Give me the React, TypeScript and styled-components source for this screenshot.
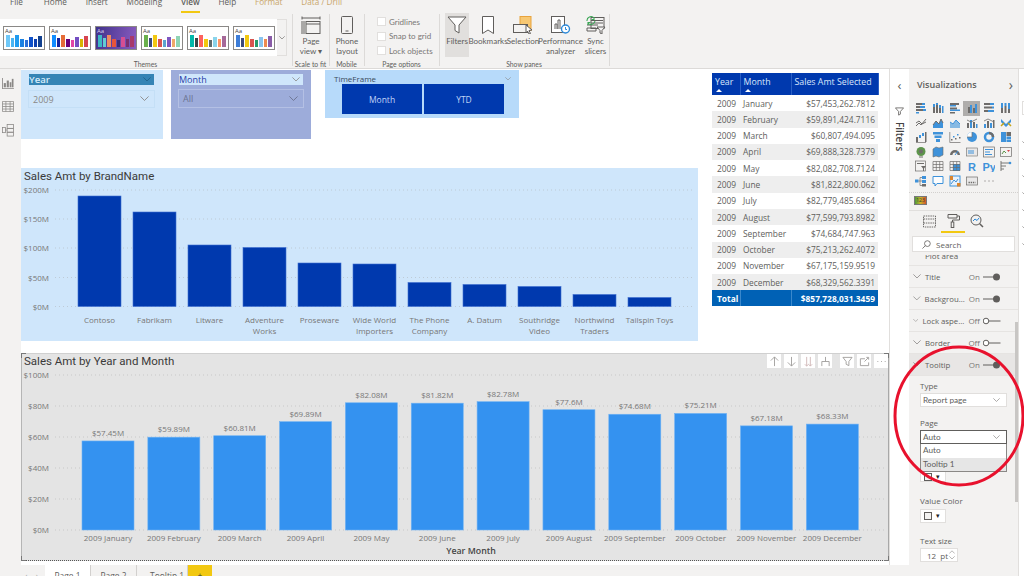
import * as React from "react";
import styled, { createGlobalStyle } from "styled-components";

const GRAY = "#605e5c";
const BLUE = "#2b88d8";
const UI_FONT = `"Open Sans", "Noto Sans", sans-serif`;
const LABEL_FONT = `Lato, "Open Sans", sans-serif`;

const GlobalStyle = createGlobalStyle`
  html, body { margin: 0; padding: 0; background: #fff; }
  * { box-sizing: border-box; }
  body { font-family: ${UI_FONT}; color: ${GRAY}; }
`;

const THEMES = [
  { bg: "#fff", ink: "#444", bars: ["#6fc8f8", "#4ab4f2", "#1f9bf0", "#1b80e2", "#2a6fd8", "#0f50c8", "#0d3fae", "#12408f"] },
  { bg: "#fff", ink: "#444", bars: ["#118dff", "#12239e", "#e66c37", "#6b007b", "#e044a7", "#744ec2", "#d9b300", "#d64550"] },
  { bg: "linear-gradient(100deg, #40328c, #8a5cc0)", ink: "#d8d0f0", bars: ["#3fb8c4", "#62ccd4", "#ef8a62", "#e8553a", "#3b2d7a", "#d64f93", "#7a2f70", "#a83a6a"] },
  { bg: "#fff", ink: "#444", bars: ["#6ab04c", "#3b4a7a", "#f2c811", "#d9534f", "#5ba4cf", "#7e57c2", "#f0a868", "#8fd4b4"] },
  { bg: "#fff", ink: "#444", bars: ["#01b8aa", "#374649", "#fd625e", "#f2c80f", "#5f6b6d", "#8ad4eb", "#fe9666", "#a66999"] },
  { bg: "#fff", ink: "#444", bars: ["#3d7dd8", "#3e4a7a", "#f2c811", "#d9534f", "#2a9a6a", "#8ac4ee", "#ee8a4f", "#8a5ca8"] },
];
const THEME_HEIGHTS = [12, 9, 12, 8, 7, 10, 8, 11];

const BRANDS = [
  { name: ["Contoso"], top: 197 },
  { name: ["Fabrikam"], top: 213 },
  { name: ["Litware"], top: 246 },
  { name: ["Adventure", "Works"], top: 248.5 },
  { name: ["Proseware"], top: 264 },
  { name: ["Wide World", "Importers"], top: 265 },
  { name: ["The Phone", "Company"], top: 283.5 },
  { name: ["A. Datum"], top: 285.5 },
  { name: ["Southridge", "Video"], top: 287.5 },
  { name: ["Northwind", "Traders"], top: 295.5 },
  { name: ["Tailspin Toys"], top: 298.5 },
];

const MONTHS = [
  { m: "January", v: 57.45, l: "$57.45M", s: "$57,453,262.7812" },
  { m: "February", v: 59.89, l: "$59.89M", s: "$59,891,424.7116" },
  { m: "March", v: 60.81, l: "$60.81M", s: "$60,807,494.095" },
  { m: "April", v: 69.89, l: "$69.89M", s: "$69,888,328.7379" },
  { m: "May", v: 82.08, l: "$82.08M", s: "$82,082,708.7124" },
  { m: "June", v: 81.82, l: "$81.82M", s: "$81,822,800.062" },
  { m: "July", v: 82.78, l: "$82.78M", s: "$82,779,485.6864" },
  { m: "August", v: 77.6, l: "$77.6M", s: "$77,599,793.8982" },
  { m: "September", v: 74.68, l: "$74.68M", s: "$74,684,747.963" },
  { m: "October", v: 75.21, l: "$75.21M", s: "$75,213,262.4072" },
  { m: "November", v: 67.18, l: "$67.18M", s: "$67,175,159.9519" },
  { m: "December", v: 68.33, l: "$68.33M", s: "$68,329,562.3391" },
];

const rects = (list: number[][]) =>
  list.map((r, i) => <rect key={i} x={r[0]} y={r[1]} width={r[2]} height={r[3]} fill={r[4] ? BLUE : GRAY} />);

const VIZ_ICONS: React.ReactNode[] = [
  rects([[1, 1, 6, 2, 0], [7, 1, 3, 2, 1], [1, 4, 4, 2, 0], [5, 4, 5, 2, 1], [1, 7, 7, 2, 0], [8, 7, 3, 2, 1], [1, 10, 3, 1.5, 1]]),
  rects([[1, 5, 2, 6, 0], [1, 2, 2, 3, 1], [4, 3, 2, 8, 0], [4, 1, 2, 2, 1], [7, 6, 2, 5, 0], [7, 3, 2, 3, 1], [10, 4, 1.5, 7, 1]]),
  rects([[1, 1, 9, 2, 0], [1, 3, 6, 1.5, 1], [1, 5.5, 7, 2, 0], [1, 7.5, 10, 1.5, 1], [1, 10, 5, 1.5, 0]]),
  rects([[2, 5, 2, 6, 0], [4, 3, 2, 8, 1], [7, 6, 2, 5, 0], [9, 2, 2, 9, 1]]),
  rects([[1, 1, 6, 2, 0], [7, 1, 4, 2, 1], [1, 4.5, 8, 2, 0], [9, 4.5, 2, 2, 1], [1, 8, 4, 2, 0], [5, 8, 6, 2, 1]]),
  rects([[1, 1, 2, 5, 1], [1, 6, 2, 5, 0], [4.5, 1, 2, 3, 1], [4.5, 4, 2, 7, 0], [8, 1, 2, 6, 1], [8, 7, 2, 4, 0]]),
  <path d="M1 9l3-3 2 2 5-6M1 6l3-2 3 3 4-2" fill="none" stroke={GRAY} strokeWidth="1" />,
  <><path d="M1 11V8l3-4 3 3 2-5 2 4v5z" fill={BLUE} /><path d="M1 8l3-4 3 3 2-5 2 4" fill="none" stroke={GRAY} /></>,
  <><path d="M1 11V5l3 2 3-4 4 4v4z" fill={BLUE} opacity=".6" /><path d="M1 5l3 2 3-4 4 4" fill="none" stroke={BLUE} /></>,
  <>{rects([[1, 6, 2, 5, 0], [4, 3, 2, 8, 1], [7, 5, 2, 6, 0], [10, 7, 1.5, 4, 1]])}<path d="M1 3l4 2 6-3" fill="none" stroke={GRAY} strokeWidth=".8" /></>,
  <>{rects([[1, 7, 2, 4, 1], [4, 4, 2, 7, 0], [7, 6, 2, 5, 1], [10, 3, 1.5, 8, 0]])}<path d="M1 4l4-2 6 3" fill="none" stroke={GRAY} strokeWidth=".8" /></>,
  <><path d="M1 2l5 5 5-5v3L6 10 1 5z" fill={BLUE} /><path d="M1 9l3-3M8 6l3 3" stroke="#c19c00" strokeWidth="1.5" /></>,
  rects([[1, 6, 2, 5, 0], [4, 4, 2, 3, 1], [7, 2, 2, 3, 1], [10, 1, 1.5, 10, 0], [1, 11, 10, .7, 0]]),
  rects([[1, 1, 10, 2.5, 1], [2.5, 4.5, 7, 2.5, 1], [4, 8, 4, 3, 1]]),
  rects([[2, 8, 1.5, 1.5, 0], [4, 5, 1.5, 1.5, 1], [6, 7, 1.5, 1.5, 0], [8, 3, 1.5, 1.5, 1], [10, 6, 1.5, 1.5, 0], [0.5, 1, .7, 10, 0], [0.5, 11, 11, .7, 0]]),
  <><circle cx="6" cy="6" r="5" fill={BLUE} /><path d="M6 6V1a5 5 0 0 0-5 5z" fill="#fff" /><path d="M6 1v5H1" stroke={GRAY} fill="none" strokeWidth=".7" /></>,
  <><circle cx="6" cy="6" r="4" fill="none" stroke={BLUE} strokeWidth="2.5" /><path d="M6 2a4 4 0 0 1 4 4" fill="none" stroke={GRAY} strokeWidth="2.5" /></>,
  rects([[1, 1, 5, 10, 1], [6.5, 1, 4.5, 4, 0], [6.5, 5.5, 4.5, 2.5, 1], [6.5, 8.5, 4.5, 2.5, 1]]),
  <><circle cx="6" cy="5.5" r="4.5" fill="#4d8a3a" /><circle cx="6" cy="5.5" r="2" fill={GRAY} /><path d="M4 11h4" stroke={GRAY} /></>,
  <path d="M1 3l3-2 3 1 4-1v8l-4 2-3-1-3 1z" fill={BLUE} stroke={GRAY} strokeWidth=".6" />,
  <><path d="M1 9a5 5 0 0 1 10 0H8.5a2.5 2.5 0 0 0-5 0z" fill={GRAY} /><path d="M6 9l3-4" stroke={BLUE} strokeWidth="1" /></>,
  <><rect x=".5" y="2" width="11" height="8" fill="#e8e8e8" stroke={GRAY} strokeWidth=".6" /><path d="M3 4v4M5 4v4M7 4v4" stroke={BLUE} strokeWidth="1" /></>,
  <><rect x=".5" y="1" width="11" height="10" fill="#f3f2f1" stroke={GRAY} strokeWidth=".7" /><path d="M2 3.5h8M2 6h5M2 8.5h7" stroke={BLUE} strokeWidth="1" /></>,
  <><rect x=".5" y="1.5" width="11" height="9" fill="#f3f2f1" stroke={GRAY} strokeWidth=".7" /><path d="M2 8l2-3 2 2" stroke="#4d8a3a" fill="none" /><path d="M7 4h3l-1.5 2z" fill="#d13438" /></>,
  <><rect x=".5" y="1" width="10" height="10" fill="none" stroke={GRAY} strokeWidth=".7" /><path d="M2 3.5h7" stroke={GRAY} /><path d="M6 6h5l-2 2.5V11H8V8.5z" fill={GRAY} /></>,
  <path d="M1 1.5h10v9H1zM1 4.5h10M1 7.5h10M4.3 1.5v9M7.7 1.5v9" fill="none" stroke={GRAY} strokeWidth=".7" />,
  <><rect x="4" y="4" width="7" height="7" fill={BLUE} /><path d="M1 1.5h10v9H1zM1 4.5h10M1 7.5h10M4.3 1.5v9M7.7 1.5v9" fill="none" stroke={GRAY} strokeWidth=".7" /></>,
  <text x="2" y="10.5" fontSize="11" fontWeight="700" fontFamily="Liberation Sans, sans-serif" fill={BLUE}>R</text>,
  <text x="-.5" y="10.5" fontSize="11" fontWeight="700" fontFamily="Liberation Sans, sans-serif" fill={BLUE}>Py</text>,
  <><path d="M1 1v10M1 3h8M1 6h5M1 9h3" fill="none" stroke={GRAY} strokeWidth=".9" /><circle cx="10" cy="3" r="1.3" fill={BLUE} /></>,
  <><rect x="0" y="4.5" width="3.5" height="3" fill={BLUE} /><rect x="7" y="1" width="4" height="3" fill={BLUE} /><rect x="7" y="5" width="4" height="3" fill={BLUE} /><rect x="7" y="9" width="4" height="2.5" fill={GRAY} /><path d="M3.5 6H7M5 2.5V10.5h2M5 2.5h2" stroke={GRAY} strokeWidth=".7" fill="none" /></>,
  <path d="M1 1.5h10v7H5l-2 2.5V8.5H1z" fill="#fff" stroke={BLUE} strokeWidth="1" />,
  <><rect x="1" y="1" width="10" height="10" fill="#e8f1fa" stroke={BLUE} /><path d="M2 9l3-4 2 2 2-3" stroke={BLUE} fill="none" /><rect x="1" y="1" width="3" height="4" fill="#d87a1a" /><rect x="8" y="8" width="3.5" height="3.5" fill="#d87a1a" /></>,
  <><rect x=".5" y="2" width="11" height="8" fill="#e8e8e8" stroke={GRAY} strokeWidth=".7" /><path d="M2.5 7.5h7" stroke={GRAY} strokeWidth="1.6" strokeDasharray="1.4 .8" /></>,
  <path d="M1.5 6h1M5.5 6h1M9.5 6h1" stroke={GRAY} strokeWidth="1" />,
];

const Chevron: React.FC<{ size?: number; color?: string }> = ({ size = 8, color = "#8a8886" }) => (
  <svg width={size} height={size * 0.6} viewBox="0 0 10 6"><path d="M.5.5L5 5 9.5.5" fill="none" stroke={color} strokeWidth="1" /></svg>
);

const ThemeThumb: React.FC<{ theme: typeof THEMES[number] }> = ({ theme }) => (
  <Thumb $bg={theme.bg}>
    <ThumbAa $ink={theme.ink}>Aa</ThumbAa>
    <ThumbBars>
      {theme.bars.map((c, i) => <ThumbBar key={i} $c={c} style={{ height: THEME_HEIGHTS[i] }} />)}
    </ThumbBars>
  </Thumb>
);

const Toggle: React.FC<{ on?: boolean }> = ({ on }) => (
  <ToggleWrap>
    <ToggleText>{on ? "On" : "Off"}</ToggleText>
    <svg width="18" height="8" viewBox="0 0 18 8">
      {on ? (
        <><path d="M0 4h11" stroke={GRAY} /><circle cx="13.5" cy="4" r="3.5" fill={GRAY} /></>
      ) : (
        <><path d="M6 4h11.500" stroke={GRAY} /><circle cx="3" cy="4" r="2.800" fill="#fff" stroke={GRAY} /></>
      )}
    </svg>
  </ToggleWrap>
);

const PropRow: React.FC<{ label: string; on?: boolean; active?: boolean }> = ({ label, on, active }) => (
  <Row $active={active}>
    <Chevron size={8} />
    <RowLabel>{label}</RowLabel>
    <Toggle on={on} />
  </Row>
);

const GRID_1 = [{ y: 191, t: "$200M" }, { y: 220, t: "$150M" }, { y: 249, t: "$100M" }, { y: 278.5, t: "$50M" }, { y: 307.5, t: "$0M" }];
const GRID_2 = [{ y: 375, t: "$100M" }, { y: 406, t: "$80M" }, { y: 437, t: "$60M" }, { y: 468, t: "$40M" }, { y: 499, t: "$20M" }, { y: 530, t: "$0M" }];

const BrandChart: React.FC = () => (
  <svg width="677" height="155" viewBox="21 187 677 155">
    {GRID_1.map(g => (
      <g key={g.t}>
        <GridLine x1="55" x2="694" y1={g.y} y2={g.y} />
        <AxisText x="49" y={g.y + 3} textAnchor="end">{g.t}</AxisText>
      </g>
    ))}
    {BRANDS.map((b, i) => {
      const x = 78 + i * 55;
      return (
        <g key={b.name[0]}>
          <rect x={x} y={b.top} width="43" height={307.5 - b.top} fill="#0039ae" stroke="#3f6fd0" strokeWidth=".6" />
          {b.name.map((line, j) => (
            <AxisText key={line} x={x + 21.5} y={324 + j * 11} textAnchor="middle">{line}</AxisText>
          ))}
        </g>
      );
    })}
  </svg>
);

const MonthChart: React.FC = () => (
  <svg width="866" height="190" viewBox="22 370 866 190">
    {GRID_2.map(g => (
      <g key={g.t}>
        <GridLine x1="55" x2="885" y1={g.y} y2={g.y} />
        <AxisText x="49" y={g.y + 3} textAnchor="end">{g.t}</AxisText>
      </g>
    ))}
    {MONTHS.map((d, i) => {
      const x = 82 + i * 65.85;
      const top = 530 - d.v * 1.55;
      return (
        <g key={d.m}>
          <rect x={x} y={top} width="52" height={530 - top} fill="#3492f0" stroke="#6fb2f4" strokeWidth=".6" />
          <AxisText x={x + 26} y={top - 5} textAnchor="middle">{d.l}</AxisText>
          <AxisText x={x + 26} y="541" textAnchor="middle">{`2009 ${d.m}`}</AxisText>
        </g>
      );
    })}
    <AxisTitle x="471" y="554" textAnchor="middle">Year Month</AxisTitle>
  </svg>
);

const ToolIcon: React.FC<{ children: React.ReactNode }> = ({ children }) => (
  <ToolBtn>
    <svg width="11" height="11" viewBox="0 0 12 12" fill="none" stroke="#a19f9d" strokeWidth="1">{children}</svg>
  </ToolBtn>
);

export default function App() {
  return (
    <Page>
      <GlobalStyle />
      <TabRow>
        {["File", "Home", "Insert", "Modeling", "View", "Help"].map(t => (
          <Tab key={t} $active={t === "View"}>{t}</Tab>
        ))}
        <Tab $gold>Format</Tab>
        <Tab $gold>Data / Drill</Tab>
      </TabRow>

      <Ribbon>
        <Group $w={293}>
          <GroupBody>
            <ThemesPanel>
              {THEMES.map((t, i) => <ThemeThumb key={i} theme={t} />)}
            </ThemesPanel>
            <ThemesMore><Chevron size={6} color={GRAY} /></ThemesMore>
          </GroupBody>
          <GroupLabel>Themes</GroupLabel>
        </Group>

        <Group $w={37}>
          <GroupBody>
            <RibbonBtn $w={36}>
              <svg width="20" height="18" viewBox="0 0 20 18" fill="none" stroke={GRAY} strokeWidth="1">
                <path d="M1 2h18M1 .5v3M19 .5v3M1 5v13M3 5v13" />
                <rect x="5" y="5.5" width="14" height="12" />
                <path d="M5 8h14" />
              </svg>
              <BtnText>Page<br />view ▾</BtnText>
            </RibbonBtn>
          </GroupBody>
          <GroupLabel>Scale to fit</GroupLabel>
        </Group>

        <Group $w={35}>
          <GroupBody>
            <RibbonBtn $w={34}>
              <svg width="12" height="18" viewBox="0 0 12 18" fill="none" stroke={GRAY} strokeWidth="1">
                <rect x=".5" y=".5" width="11" height="17" rx="1" />
                <path d="M4.5 15h3" />
              </svg>
              <BtnText>Phone<br />layout</BtnText>
            </RibbonBtn>
          </GroupBody>
          <GroupLabel>Mobile</GroupLabel>
        </Group>

        <Group $w={75}>
          <GroupBody>
            <CheckList>
              {["Gridlines", "Snap to grid", "Lock objects"].map(c => (
                <CheckRow key={c}><CheckBox />{c}</CheckRow>
              ))}
            </CheckList>
          </GroupBody>
          <GroupLabel>Page options</GroupLabel>
        </Group>

        <Group $w={170}>
          <GroupBody $pad={5}>
            <RibbonBtn $w={24} $selected>
              <svg width="20" height="18" viewBox="0 0 20 18" fill="#fff" stroke={GRAY} strokeWidth="1">
                <path d="M1 1h18l-7 8v8l-4-2.5V9z" />
              </svg>
              <BtnText>Filters</BtnText>
            </RibbonBtn>
            <RibbonBtn $w={38}>
              <svg width="14" height="18" viewBox="0 0 14 18" fill="#fff" stroke={GRAY} strokeWidth="1">
                <path d="M1.5 .5h11v17L7 14l-5.500 3.500z" />
              </svg>
              <BtnText>Bookmarks</BtnText>
            </RibbonBtn>
            <RibbonBtn $w={32}>
              <svg width="20" height="18" viewBox="0 0 20 18" stroke={GRAY} strokeWidth="1">
                <rect x="7" y=".5" width="11" height="14" fill="#f7c873" stroke="#e8a33d" />
                <rect x=".5" y="8.500" width="14" height="8" fill="#f3f2f1" />
                <path d="M13 9l6 5-3 .5 1.500 3-1.500.5-1.500-3-1.500 2z" fill="#fff" />
              </svg>
              <BtnText>Selection</BtnText>
            </RibbonBtn>
            <RibbonBtn $w={43}>
              <svg width="20" height="18" viewBox="0 0 20 18" fill="none" stroke={GRAY} strokeWidth="1">
                <rect x=".5" y=".5" width="13" height="16" fill="#fff" />
                <path d="M4 13V8h2v5M7 13V4h2v9" />
                <circle cx="14.500" cy="13" r="4" fill="#fff" stroke="#2b88d8" strokeWidth="1.400" />
                <path d="M14.500 11v2.500h1.500" stroke="#2b88d8" />
              </svg>
              <BtnText>Performance<br />analyzer</BtnText>
            </RibbonBtn>
            <RibbonBtn $w={27}>
              <svg width="20" height="18" viewBox="0 0 20 18" fill="none" stroke={GRAY} strokeWidth="1">
                <rect x="5" y="1.500" width="13" height="11" />
                <path d="M1 9h11M1 12h9v3H1zM5 4.500h12M5 7h12" />
                <path d="M11 11h8l-3 3.500V18l-2-1v-2.500z" fill="#f3f2f1" />
                <path d="M1 5a4 4 0 0 1 7-3M8 1v2.500H5.500M9 5a4 4 0 0 1-7 2M2 9V6.500h2.500" stroke="#3aa655" strokeWidth="1.100" />
              </svg>
              <BtnText>Sync<br />slicers</BtnText>
            </RibbonBtn>
          </GroupBody>
          <GroupLabel>Show panes</GroupLabel>
        </Group>
      </Ribbon>

      <Body>
        <Rail>
          <svg width="12" height="11" viewBox="0 0 14 13" fill="#8a8886">
            <path d="M1 0v12h13v1H0V0z" /><rect x="2" y="6" width="2.500" height="5" /><rect x="5.500" y="3" width="2.500" height="8" /><rect x="9" y="5" width="2" height="6" /><rect x="11.500" y="1" width="2" height="10" />
          </svg>
          <svg width="12" height="11" viewBox="0 0 14 13" fill="none" stroke="#8a8886" strokeWidth=".9">
            <path d="M.5.500h13v12H.5zM.5 3.500h13M.5 6.500h13M.5 9.500h13M4.500.500v12M9.500.500v12" />
          </svg>
          <svg width="12" height="13" viewBox="0 0 14 15" fill="none" stroke="#8a8886" strokeWidth=".9">
            <rect x="6" y=".5" width="7.500" height="4.500" /><rect x="6" y="5" width="7.500" height="4.500" /><rect x="6" y="9.500" width="7.500" height="4.500" /><rect x=".5" y="4" width="3.500" height="6" /><path d="M4 7h2" />
          </svg>
        </Rail>

        <Center>
          <CenterTop>
            <Canvas>
              <TopArea>
                <LeftCol>
                  <Slicers>
                    <YearSlicer>
                      <YearHeader>Year<Chevron size={8} color="#1f5f88" /></YearHeader>
                      <SlicerSelect>2009<Chevron size={9} /></SlicerSelect>
                    </YearSlicer>
                    <MonthSlicer>
                      <MonthHeader>Month<Chevron size={8} /></MonthHeader>
                      <MonthSelect>All<Chevron size={9} color="#6b7390" /></MonthSelect>
                    </MonthSlicer>
                    <TimeSlicer>
                      <TimeHeader>TimeFrame<Chevron size={6} /></TimeHeader>
                      <TimeButtons>
                        <TimeBtn>Month</TimeBtn>
                        <TimeBtn>YTD</TimeBtn>
                      </TimeButtons>
                    </TimeSlicer>
                  </Slicers>
                  <BrandCard>
                    <ChartTitle>Sales Amt by BrandName</ChartTitle>
                    <BrandChart />
                  </BrandCard>
                </LeftCol>

                <SalesTable>
                  <thead>
                    <tr>
                      <HeadCell $w={28}>Year<SortUp /></HeadCell>
                      <HeadCell $w={51}>Month<SortUp /></HeadCell>
                      <HeadCell $w={87}>Sales Amt Selected</HeadCell>
                    </tr>
                  </thead>
                  <tbody>
                    {MONTHS.map((d, i) => (
                      <BodyRow key={d.m} $alt={i % 2 === 1}>
                        <YearCell>2009</YearCell>
                        <MonthCell>{d.m}</MonthCell>
                        <AmtCell>{d.s}</AmtCell>
                      </BodyRow>
                    ))}
                    <TotalRow>
                      <TotalCell>Total</TotalCell>
                      <TotalCell />
                      <TotalAmt>$857,728,031.3459</TotalAmt>
                    </TotalRow>
                  </tbody>
                </SalesTable>
              </TopArea>

              <MonthCard>
                <MonthTitle>Sales Amt by Year and Month</MonthTitle>
                <MonthChart />
                <VisualToolbar>
                  <ToolGroup>
                    <ToolIcon><path d="M6 11V1M2 5l4-4 4 4" /></ToolIcon>
                    <ToolIcon><path d="M6 1v10M2 7l4 4 4-4" /></ToolIcon>
                    <ToolIcon><path d="M4 1v10M8 1v10M2 9l2 2 2-2M6 9l2 2 2-2" stroke="#d0b8b8" /></ToolIcon>
                    <ToolIcon><path d="M6 1v5M2 11V6h8v5" /></ToolIcon>
                  </ToolGroup>
                  <ToolGroup>
                    <ToolIcon><path d="M1 1.500h10L7.500 6v4.500l-3-1.500V6z" /></ToolIcon>
                    <ToolIcon><path d="M8 1.500h2.500V4M1.500 3h5M1.500 3v7.500h9V7M6 6l4-4" /></ToolIcon>
                    <ToolIcon><path d="M1.500 6h1M5.500 6h1M9.500 6h1" /></ToolIcon>
                  </ToolGroup>
                </VisualToolbar>
                <Corner $side="tl" />
                <Corner $side="tr" />
                <Corner $side="bl" />
                <Corner $side="br" />
              </MonthCard>
            </Canvas>

            <FiltersStrip>
              <StripChevron>‹</StripChevron>
              <svg width="9" height="9" viewBox="0 0 10 10" fill="none" stroke={GRAY} strokeWidth=".9"><path d="M9.500 1H.5l3.500 4v4l2-1V5z" /></svg>
              <FiltersLabel>Filters</FiltersLabel>
            </FiltersStrip>
          </CenterTop>

          <PageTabs>
            <TabArrows>‹ ›</TabArrows>
            <PageTab $active>Page 1</PageTab>
            <PageTab>Page 2</PageTab>
            <PageTab $w={51}>⋯ Tooltip 1</PageTab>
            <AddTab>+</AddTab>
          </PageTabs>
        </Center>

        <VizPane>
          <VizHead>Visualizations<PaneChevron>›</PaneChevron></VizHead>
          <VizGrid>
            {VIZ_ICONS.map((icon, i) => (
              <VizCell key={i} $selected={i === 3}>
                <svg width="12" height="12" viewBox="0 0 12 12">{icon}</svg>
              </VizCell>
            ))}
          </VizGrid>
          <HeatRow>
            <HeatIcon>123</HeatIcon>
          </HeatRow>
          <PaneTabs>
            <PaneTab>
              <svg width="13" height="13" viewBox="0 0 13 13" fill="none" stroke={GRAY} strokeWidth=".9" strokeDasharray="1.500 .8">
                <path d="M.5 1h12v11H.5zM.5 4h12M.5 8h12" />
              </svg>
            </PaneTab>
            <PaneTab $active>
              <svg width="13" height="14" viewBox="0 0 13 14" fill="none" stroke={GRAY} strokeWidth="1">
                <path d="M1 .5h9v3.500H1zM10 2h2.500v4H5.500v2" /><rect x="4.200" y="8" width="2.600" height="5.500" />
              </svg>
            </PaneTab>
            <PaneTab>
              <svg width="14" height="14" viewBox="0 0 14 14" fill="none" stroke={GRAY} strokeWidth="1">
                <circle cx="6" cy="6" r="5" /><path d="M9.500 9.500L13 13" strokeWidth="1.500" /><path d="M3 7l2-2 2 1.500 2-2.500" stroke="#2b88d8" />
              </svg>
            </PaneTab>
          </PaneTabs>
          <SearchBox>
            <svg width="9" height="9" viewBox="0 0 10 10" fill="none" stroke={GRAY} strokeWidth=".9"><circle cx="6" cy="4" r="3.200" /><path d="M3.700 6.300L.5 9.500" /></svg>
            Search
          </SearchBox>
          <ClippedRow><ClippedText>Plot area</ClippedText></ClippedRow>
          <PropRow label="Title" on />
          <PropRow label="Backgrou..." on />
          <PropRow label="Lock aspe..." />
          <PropRow label="Border" />
          <PropRow label="Tooltip" on active />
          <PaneForm>
            <TypeLabel>Type</TypeLabel>
            <Dropdown>Report page<Chevron size={7} /></Dropdown>
            <PageLabel>Page</PageLabel>
            <Dropdown $open>Auto<Chevron size={7} /></Dropdown>
            <Menu>
              <MenuItem>Auto</MenuItem>
              <MenuItem $hover>Tooltip 1</MenuItem>
            </Menu>
            <ColorBtnShort><SwatchBox /><Caret>▾</Caret></ColorBtnShort>
            <ValueLabel>Value Color</ValueLabel>
            <ColorBtn><SwatchBox /><Caret>▾</Caret></ColorBtn>
            <SizeLabel>Text size</SizeLabel>
            <Spinner>
              12&nbsp;&nbsp;pt
              <SpinArrows>
                <svg width="6" height="4" viewBox="0 0 10 6"><path d="M.5 5.500L5 1l4.500 4.500" fill="none" stroke="#8a8886" /></svg>
                <Chevron size={6} />
              </SpinArrows>
            </Spinner>
          </PaneForm>
          <PaneScroll />
        </VizPane>

        <FieldsStrip>
          <FieldsBox />
          {[137, 155, 172, 189, 206, 223, 240].map(y => (
            <FieldsChevron key={y}><Chevron size={7} /></FieldsChevron>
          ))}
        </FieldsStrip>
      </Body>

      <RedCircle width="134" height="144" viewBox="0 0 134 144">
        <ellipse cx="67" cy="72" rx="64" ry="69" fill="none" stroke="#e8112d" strokeWidth="3" />
      </RedCircle>
    </Page>
  );
}

const Page = styled.div`
  position: relative;
  width: 1024px;
  height: 576px;
  overflow: hidden;
  display: flex;
  flex-direction: column;
  background: #fff;
  font-family: ${UI_FONT};
`;

const TabRow = styled.div`
  display: flex;
  gap: 18.8px;
  height: 13px;
  padding-left: 10px;
  background: #f3f2f1;
  overflow: hidden;
`;

const Tab = styled.div<{ $active?: boolean; $gold?: boolean }>`
  height: 16px;
  margin-top: -3px;
  font-size: 8.2px;
  line-height: 10px;
  color: ${p => (p.$gold ? "#c9a66b" : "#605e5c")};
  font-weight: ${p => (p.$active ? 600 : 400)};
  border-bottom: ${p => (p.$active ? "2px solid #f2c811" : "none")};
  &:first-child { margin-right: 2px; }
`;

const Ribbon = styled.div`
  display: flex;
  height: 56px;
  background: #f3f2f1;
  border-bottom: 1px solid #dcdad8;
  box-shadow: 0 1px 1px rgba(0, 0, 0, 0.06);
`;

const Group = styled.div<{ $w: number }>`
  width: ${p => p.$w}px;
  display: flex;
  flex-direction: column;
  position: relative;
  &::after {
    content: "";
    position: absolute;
    right: 0;
    top: 1px;
    height: 52px;
    width: 1px;
    background: #dcdad8;
  }
`;

const GroupBody = styled.div<{ $pad?: number }>`
  height: 47px;
  display: flex;
  padding-left: ${p => p.$pad || 0}px;
`;

const GroupLabel = styled.div`
  height: 8px;
  line-height: 8px;
  text-align: center;
  font-family: ${LABEL_FONT};
  font-size: 6.8px;
  color: #605e5c;
  padding-right: 2px;
`;

const ThemesPanel = styled.div`
  width: 277px;
  height: 37px;
  margin-top: 6px;
  background: #fff;
  display: flex;
  gap: 4px;
  padding: 7px 0 0 3px;
`;

const ThemesMore = styled.div`
  width: 10px;
  height: 37px;
  margin-top: 6px;
  display: flex;
  align-items: center;
  justify-content: center;
  border: 1px solid #e1dfdd;
  border-left: none;
`;

const Thumb = styled.div<{ $bg: string }>`
  position: relative;
  width: 42px;
  height: 24px;
  background: ${p => p.$bg};
  border: 1px solid #8a8886;
`;

const ThumbAa = styled.div<{ $ink: string }>`
  position: absolute;
  left: 1px;
  top: 0;
  font-size: 6px;
  line-height: 9px;
  color: ${p => p.$ink};
`;

const ThumbBars = styled.div`
  position: absolute;
  left: 2px;
  right: 2px;
  bottom: 2px;
  display: flex;
  align-items: flex-end;
  gap: 1px;
`;

const ThumbBar = styled.div<{ $c: string }>`
  flex: 1;
  background: ${p => p.$c};
`;

const RibbonBtn = styled.div<{ $w: number; $selected?: boolean }>`
  width: ${p => p.$w}px;
  height: 44px;
  padding-top: 3px;
  display: flex;
  flex-direction: column;
  align-items: center;
  flex: none;
  background: ${p => (p.$selected ? "#e1dfdd" : "transparent")};
  & > svg { flex: none; }
`;

const BtnText = styled.div`
  margin-top: 2px;
  font-family: ${LABEL_FONT};
  font-size: 8px;
  line-height: 10px;
  text-align: center;
  white-space: nowrap;
  color: #605e5c;
`;

const CheckList = styled.div`
  display: flex;
  flex-direction: column;
  gap: 5.5px;
  padding: 4px 0 0 12px;
`;

const CheckRow = styled.div`
  display: flex;
  align-items: center;
  gap: 3px;
  height: 9px;
  font-family: ${LABEL_FONT};
  font-size: 8px;
  color: #797775;
  white-space: nowrap;
`;

const CheckBox = styled.span`
  width: 9px;
  height: 9px;
  background: #fff;
  border: 1px solid #e1dfdd;
`;

const Body = styled.div`
  flex: 1;
  display: flex;
  min-height: 0;
`;

const Rail = styled.div`
  width: 21px;
  flex: none;
  background: #f3f2f1;
  display: flex;
  flex-direction: column;
  align-items: center;
  gap: 12px;
  padding: 9px 5px 0 0;
`;

const Center = styled.div`
  width: 888px;
  flex: none;
  display: flex;
  flex-direction: column;
`;

const CenterTop = styled.div`
  height: 496px;
  display: flex;
`;

const Canvas = styled.div`
  width: 868px;
  flex: none;
  background: #fff;
`;

const TopArea = styled.div`
  display: flex;
  height: 273px;
`;

const LeftCol = styled.div`
  width: 677px;
  flex: none;
`;

const Slicers = styled.div`
  height: 99px;
  padding-top: 1px;
  display: flex;
  align-items: flex-start;
`;

const YearSlicer = styled.div`
  width: 142px;
  height: 69px;
  margin-right: 8px;
  padding: 4px 8px 0 7px;
  background: #cfe6fb;
`;

const YearHeader = styled.div`
  height: 11px;
  margin: 0 1px;
  padding: 0 3px 0 0;
  display: flex;
  align-items: center;
  justify-content: space-between;
  background: #3584b5;
  color: #d8ecfb;
  font-size: 9.6px;
  font-weight: 600;
`;

const SlicerSelect = styled.div`
  height: 18px;
  margin-top: 5px;
  padding: 0 5px 0 4px;
  display: flex;
  align-items: center;
  justify-content: space-between;
  border: 1px solid #c4dff6;
  color: #8a8886;
  font-size: 9px;
`;

const MonthSlicer = styled.div`
  width: 140px;
  height: 69px;
  margin-right: 14px;
  padding: 4px 7px 0 7px;
  background: #9dacda;
`;

const MonthHeader = styled(YearHeader)`
  margin: 0 1px;
  background: #cfe6fb;
  color: #2a3ea8;
  font-size: 9px;
  font-weight: 500;
`;

const MonthSelect = styled(SlicerSelect)`
  height: 19px;
  margin-top: 4px;
  border: 1px solid #b4c0e4;
  color: #6b7390;
`;

const TimeSlicer = styled.div`
  width: 194px;
  height: 48px;
  padding: 3px 8px 0 9px;
  background: #b7dafa;
`;

const TimeHeader = styled.div`
  height: 11px;
  display: flex;
  align-items: center;
  justify-content: space-between;
  font-size: 8px;
  color: #3b4a5a;
`;

const TimeButtons = styled.div`
  display: flex;
  gap: 2px;
  margin: 0 7px 0 8px;
`;

const TimeBtn = styled.div`
  flex: 1;
  height: 30px;
  display: flex;
  align-items: center;
  justify-content: center;
  background: #0039ae;
  color: #c0d4f8;
  font-size: 8.5px;
`;

const BrandCard = styled.div`
  width: 677px;
  height: 173px;
  background: #cfe6fb;
`;

const ChartTitle = styled.div`
  height: 18px;
  padding: 1px 0 0 3px;
  font-family: Roboto, "Liberation Sans", sans-serif;
  font-size: 11.5px;
  line-height: 14px;
  color: #3b3a39;
`;

const MonthTitle = styled(ChartTitle)`
  padding: 0 0 0 2px;
`;

const GridLine = styled.line`
  stroke: #a6a6a6;
  stroke-width: 0.7;
  stroke-dasharray: 1 3;
  opacity: 0.6;
`;

const AxisText = styled.text`
  font-family: ${UI_FONT};
  font-size: 8px;
  fill: #777;
`;

const AxisTitle = styled.text`
  font-family: ${UI_FONT};
  font-size: 8.8px;
  font-weight: 600;
  fill: #444;
`;

const SalesTable = styled.table`
  width: 166px;
  height: 233px;
  margin: 4px 0 0 14px;
  border-collapse: collapse;
  table-layout: fixed;
  font-size: 8.4px;
  color: #605e5c;
`;

const HeadCell = styled.th<{ $w: number }>`
  position: relative;
  width: ${p => p.$w}px;
  height: 22px;
  padding: 0 0 5px 3px;
  background: #0039ae;
  border-right: 1px solid #2a5fc4;
  color: #d8e6fb;
  font-size: 8.8px;
  font-weight: 400;
  text-align: left;
  white-space: nowrap;
`;

const SortUp = styled.span`
  position: absolute;
  left: 4px;
  bottom: 3px;
  width: 0;
  height: 0;
  border-left: 3px solid transparent;
  border-right: 3px solid transparent;
  border-bottom: 3px solid #fff;
`;

const BodyRow = styled.tr<{ $alt?: boolean }>`
  height: 16.27px;
  background: ${p => (p.$alt ? "#eeeeee" : "#fff")};
`;

const YearCell = styled.td`
  padding: 0 0 0 5px;
`;

const MonthCell = styled.td`
  padding: 0 0 0 3px;
`;

const AmtCell = styled.td`
  padding: 0 3px 0 0;
  text-align: right;
  white-space: nowrap;
`;

const TotalRow = styled.tr`
  height: 15.5px;
  background: #0061b5;
`;

const TotalCell = styled.td`
  padding: 0 0 0 5px;
  color: #fff;
  font-weight: 700;
  border-right: 1px solid #3a88cc;
`;

const TotalAmt = styled.td`
  padding: 0 3px 0 0;
  color: #fff;
  font-weight: 700;
  text-align: right;
  white-space: nowrap;
`;

const MonthCard = styled.div`
  position: relative;
  width: 868px;
  height: 208px;
  margin-top: 11px;
  background: #e4e4e4;
  border-left: 1px solid #b5b5b5;
  border-right: 1px solid #a8a8a8;
  border-top: 1px solid #d0d0d0;
  border-bottom: 1px dotted #555;
  & > svg { display: block; margin-top: -2px; }
`;

const VisualToolbar = styled.div`
  position: absolute;
  top: 0;
  right: 0;
  display: flex;
  gap: 8px;
`;

const ToolGroup = styled.div`
  display: flex;
  gap: 3px;
`;

const ToolBtn = styled.div`
  width: 14px;
  height: 14px;
  display: flex;
  align-items: center;
  justify-content: center;
  background: #fff;
`;

const Corner = styled.span<{ $side: string }>`
  position: absolute;
  width: 5px;
  height: 5px;
  border: 0 solid #777;
  ${p => (p.$side.includes("t") ? "top: -1px; border-top-width: 1.5px;" : "bottom: -1px; border-bottom-width: 1.5px;")}
  ${p => (p.$side.includes("l") ? "left: -1px; border-left-width: 1.5px;" : "right: -1px; border-right-width: 1.5px;")}
`;

const FiltersStrip = styled.div`
  width: 20px;
  flex: none;
  display: flex;
  flex-direction: column;
  align-items: center;
  background: #fff;
  border-left: 1px solid #e1dfdd;
  padding-top: 9px;
  gap: 15px;
`;

const StripChevron = styled.div`
  font-size: 13px;
  line-height: 14px;
  color: ${GRAY};
`;

const FiltersLabel = styled.div`
  margin-top: -9px;
  writing-mode: vertical-rl;
  font-size: 9.8px;
  font-weight: 600;
  color: #444;
`;

const PageTabs = styled.div`
  height: 11px;
  display: flex;
  background: #f3f2f1;
  overflow: hidden;
  font-size: 8.4px;
  line-height: 22px;
`;

const TabArrows = styled.div`
  width: 24px;
  padding-left: 4px;
  color: #a19f9d;
  letter-spacing: 3px;
`;

const PageTab = styled.div<{ $active?: boolean; $w?: number }>`
  width: ${p => p.$w || 46}px;
  text-align: center;
  background: ${p => (p.$active ? "#fff" : "#f3f2f1")};
  border-right: 1px solid #d2d0ce;
  white-space: nowrap;
`;

const AddTab = styled.div`
  width: 24px;
  text-align: center;
  background: #f2c811;
  color: #333;
`;

const VizPane = styled.div`
  position: relative;
  width: 109px;
  flex: none;
  background: #f3f2f1;
  overflow: hidden;
`;

const VizHead = styled.div`
  height: 31px;
  padding: 9px 5px 0 8px;
  display: flex;
  justify-content: space-between;
  font-size: 9px;
  line-height: 14px;
  font-weight: 600;
  color: #605e5c;
`;

const PaneChevron = styled.span`
  font-size: 14px;
  font-weight: 400;
  line-height: 13px;
`;

const VizGrid = styled.div`
  display: grid;
  grid-template-columns: repeat(6, 17px);
  grid-auto-rows: 14.5px;
  padding: 1px 0 0 3px;
  height: 93px;
  border-bottom: 1px dotted #d2d0ce;
`;

const VizCell = styled.div<{ $selected?: boolean }>`
  display: flex;
  align-items: center;
  justify-content: center;
  opacity: 0.9;
  background: ${p => (p.$selected ? "#a8a6a4" : "transparent")};
`;

const HeatRow = styled.div`
  height: 18px;
  padding: 2px 0 0 5px;
  border-bottom: 1px solid #e1dfdd;
`;

const HeatIcon = styled.div`
  width: 13px;
  height: 9px;
  margin-top: 1px;
  background: linear-gradient(90deg, #4d9a3a, #c9b52a, #d6542a);
  border: 1px solid #777;
  font-size: 5px;
  line-height: 7px;
  text-align: center;
  color: #333;
`;

const PaneTabs = styled.div`
  height: 22px;
  padding-left: 8px;
  display: flex;
`;

const PaneTab = styled.div<{ $active?: boolean }>`
  width: 24px;
  height: 22px;
  display: flex;
  align-items: center;
  justify-content: center;
  border-bottom: ${p => (p.$active ? "2px solid #f2c811" : "2px solid transparent")};
`;

const SearchBox = styled.div`
  height: 16px;
  margin: 3px 3px 0 3px;
  padding-left: 9px;
  display: flex;
  align-items: center;
  gap: 5px;
  background: #fff;
  border: 1px solid #e1dfdd;
  font-size: 8px;
  color: #605e5c;
`;

const ClippedRow = styled.div`
  height: 11px;
  margin-top: 3px;
  padding-left: 16px;
  overflow: hidden;
  border-bottom: 1px solid #e6e4e2;
`;

const ClippedText = styled.div`
  margin-top: -4px;
  font-size: 8px;
  line-height: 10px;
`;

const Row = styled.div<{ $active?: boolean }>`
  height: 22px;
  padding: 0 17px 0 4px;
  display: flex;
  align-items: center;
  gap: 4px;
  background: ${p => (p.$active ? "#e8e6e5" : "transparent")};
  border-bottom: 1px solid #e6e4e2;
`;

const RowLabel = styled.div`
  flex: 1;
  font-size: 7.8px;
  color: #605e5c;
  white-space: nowrap;
`;

const ToggleWrap = styled.div`
  display: flex;
  align-items: center;
  gap: 3px;
`;

const ToggleText = styled.span`
  font-size: 8px;
  color: #797775;
`;

const PaneForm = styled.div`
  padding: 4px 11px 0 11px;
  font-size: 8px;
  color: #605e5c;
`;

const FormLabel = styled.div`
  height: 12px;
  line-height: 12px;
  font-size: 8px;
`;

const TypeLabel = styled(FormLabel)``;

const PageLabel = styled(FormLabel)`
  margin-top: 10px;
`;

const ValueLabel = styled(FormLabel)`
  margin-top: 13px;
`;

const SizeLabel = styled(FormLabel)`
  margin-top: 12px;
`;

const Dropdown = styled.div<{ $open?: boolean }>`
  height: 14px;
  margin-top: 1px;
  padding: 0 6px 0 2px;
  display: flex;
  align-items: center;
  justify-content: space-between;
  background: #fff;
  border: 1px solid ${p => (p.$open ? "#605e5c" : "#e1dfdd")};
  font-family: ${LABEL_FONT};
  font-size: 8.2px;
`;

const Menu = styled.div`
  height: 28px;
  border: 1px solid #8a8886;
  border-top: none;
  background: #fff;
  font-family: ${LABEL_FONT};
  font-size: 8.2px;
`;

const MenuItem = styled.div<{ $hover?: boolean }>`
  height: 13.5px;
  padding-left: 2px;
  line-height: 13.5px;
  background: ${p => (p.$hover ? "#e6e6e6" : "#fff")};
`;

const ColorBtn = styled.div`
  width: 26px;
  height: 14px;
  margin-top: 2px;
  padding-left: 3px;
  display: flex;
  align-items: center;
  gap: 4px;
  background: #fff;
  border: 1px solid #e1dfdd;
`;

const ColorBtnShort = styled(ColorBtn)`
  height: 10px;
  margin-top: 0;
  border-top: none;
  overflow: hidden;
`;

const SwatchBox = styled.span`
  width: 8px;
  height: 8px;
  flex: none;
  background: #f3f2f1;
  border: 1px solid #605e5c;
`;

const Caret = styled.span`
  font-size: 7px;
  line-height: 8px;
  color: #222;
`;

const Spinner = styled.div`
  width: 38px;
  height: 14px;
  margin-top: 1px;
  padding: 0 2px 0 6px;
  display: flex;
  align-items: center;
  justify-content: space-between;
  background: #fff;
  border: 1px solid #e1dfdd;
  font-size: 8px;
  white-space: nowrap;
`;

const SpinArrows = styled.span`
  display: flex;
  flex-direction: column;
  gap: 2px;
  & > svg { display: block; }
`;

const PaneScroll = styled.div`
  position: absolute;
  top: 253px;
  right: 0;
  width: 3px;
  height: 180px;
  background: #c8c6c4;
`;

const FieldsStrip = styled.div`
  width: 6px;
  flex: none;
  background: #fff;
  border-left: 1px solid #e1dfdd;
  overflow: hidden;
  padding-left: 3px;
  display: flex;
  flex-direction: column;
`;

const FieldsBox = styled.div`
  width: 10px;
  height: 14px;
  margin: 32px 0 13px;
  border: 1px solid #e1dfdd;
`;

const FieldsChevron = styled.div`
  height: 17px;
`;

const RedCircle = styled.svg`
  position: absolute;
  left: 892px;
  top: 344px;
`;
